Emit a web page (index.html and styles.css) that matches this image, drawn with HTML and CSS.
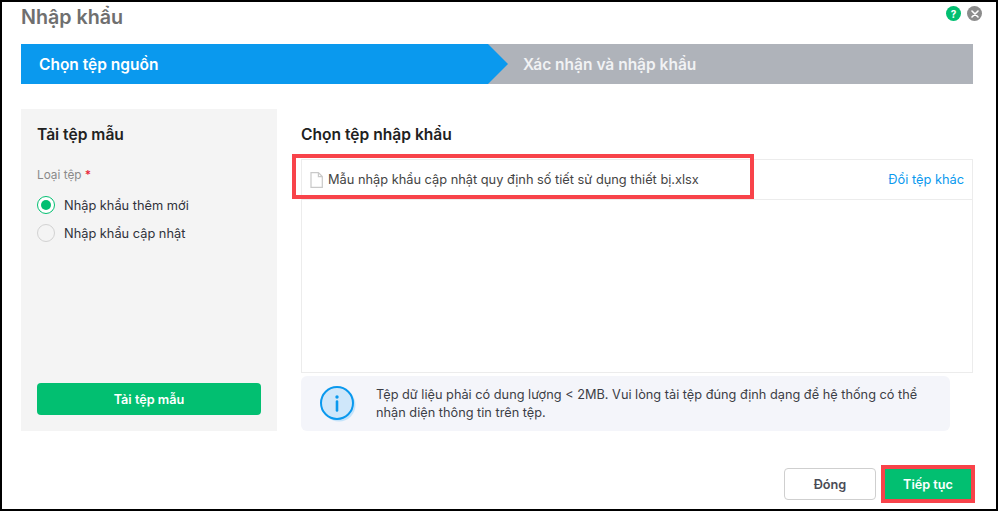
FILE: index.html
```html
<!DOCTYPE html>
<html lang="vi">
<head>
    <meta charset="UTF-8">
    <meta name="viewport" content="width=device-width, initial-scale=1.0">
    <title>Nhập khẩu</title>
    <link rel="stylesheet" href="styles.css">
</head>
<body>
    <div class="dialog">
        <div class="dialog-header">
            <h1>Nhập khẩu</h1>
            <div class="header-icons">
                <span class="round-icon help">?</span>
                <span class="round-icon close">
                    <svg width="8" height="8" viewBox="0 0 8 8"><path d="M1 1l6 6M7 1l-6 6" stroke="#fff" stroke-width="1.6" stroke-linecap="round"/></svg>
                </span>
            </div>
        </div>

        <div class="steps">
            <div class="step step-active">Chọn tệp nguồn</div>
            <div class="step step-next">Xác nhận và nhập khẩu</div>
        </div>

        <div class="content">
            <div class="side">
                <h2>Tải tệp mẫu</h2>
                <div class="field-label">Loại tệp <span class="required">*</span></div>
                <label class="radio-row"><span class="radio radio-on"></span>Nhập khẩu thêm mới</label>
                <label class="radio-row"><span class="radio"></span>Nhập khẩu cập nhật</label>
                <button class="btn-download">Tải tệp mẫu</button>
            </div>

            <div class="main">
                <h2>Chọn tệp nhập khẩu</h2>
                <div class="file-box">
                    <div class="file-row">
                        <svg class="file-icon" width="13" height="16" viewBox="0 0 13 16"><path d="M1 .7h7.4L12.3 4.600V15.300H1z M8.400 .7V4.600H12.300" fill="#fff" stroke="#c9c9c9" stroke-width="1.200"/></svg>
                        <span class="file-name">Mẫu nhập khẩu cập nhật quy định số tiết sử dụng thiết bị.xlsx</span>
                        <a class="change-file">Đổi tệp khác</a>
                        <div class="highlight highlight-file"></div>
                    </div>
                </div>
                <div class="notice">
                    <svg class="notice-icon" width="38" height="38" viewBox="0 0 38 38">
                        <circle cx="20" cy="20" r="16.500" fill="#c4e3fa"/>
                        <circle cx="18" cy="18" r="16" fill="#cfe7fa" stroke="#0a99ee" stroke-width="2"/>
                        <circle cx="18" cy="12" r="1.700" fill="#0a99ee"/>
                        <path d="M18 16.500v9" stroke="#0a99ee" stroke-width="2.600" stroke-linecap="round"/>
                    </svg>
                    <p>Tệp dữ liệu phải có dung lượng &lt; 2MB. Vui lòng tải tệp đúng định dạng để hệ thống có thể nhận diện thông tin trên tệp.</p>
                </div>
            </div>
        </div>

        <div class="dialog-footer">
            <button class="btn-close">Đóng</button>
            <button class="btn-next">Tiếp tục</button>
        </div>
    </div>
</body>
</html>
```

FILE: styles.css
```css
* {
    box-sizing: border-box;
}

html, body {
    margin: 0;
    height: 100%;
    background: #fff;
}

body {
    font-family: Inter, "Liberation Sans", sans-serif;
    overflow: hidden;
}

.dialog {
    height: 511px;
    border: 2px solid #000;
    padding: 0 23px 0 19px;
    display: flex;
    flex-direction: column;
}

.dialog-header {
    height: 42px;
    display: flex;
    justify-content: space-between;
}

h1 {
    margin: 3px 0 0;
    font-size: 19.700px;
    line-height: 24px;
    font-weight: 600;
    color: #6f6f6f;
}

.header-icons {
    display: flex;
    gap: 6px;
    margin: 4px 0 0;
    position: relative;
    left: 9px;
}

.round-icon {
    width: 15px;
    height: 15px;
    border-radius: 50%;
    display: flex;
    align-items: center;
    justify-content: center;
    color: #fff;
    font-size: 10px;
    font-weight: 700;
}

.help {
    background: #02bf71;
}

.close {
    background: #8c8c8c;
}

.steps {
    display: flex;
    height: 40px;
    background: #afb3ba;
    flex-shrink: 0;
}

.step {
    font-size: 15.500px;
    line-height: 41px;
    font-weight: 600;
    color: #fff;
}

.step-active {
    width: 467px;
    padding-left: 18px;
    background: #0a99ee;
    position: relative;
}

.step-active::after {
    content: "";
    position: absolute;
    left: 100%;
    top: 0;
    border-left: 20px solid #0a99ee;
    border-top: 20px solid transparent;
    border-bottom: 20px solid transparent;
}

.step-next {
    padding-left: 35px;
    color: #f1f2f4;
}

.content {
    display: flex;
    gap: 24px;
    margin-top: 25px;
    height: 322px;
}

.side {
    width: 256px;
    padding: 16px 16px;
    background: #f4f4f4;
    display: flex;
    flex-direction: column;
}

h2 {
    margin: 0;
    font-size: 15.600px;
    line-height: 20px;
    font-weight: 600;
    color: #212121;
}

.field-label {
    margin-top: 22px;
    font-size: 11.800px;
    line-height: 16px;
    color: #8a8a8a;
}

.required {
    color: #e8283a;
    font-weight: 600;
}

.radio-row {
    display: flex;
    align-items: center;
    gap: 9px;
    height: 28px;
    font-size: 12.800px;
    color: #30323a;
}

.field-label + .radio-row {
    margin-top: 8px;
}

.radio {
    width: 18px;
    height: 18px;
    border-radius: 50%;
    border: 1px solid #d2d2d2;
    background: #f4f4f4;
    flex-shrink: 0;
    display: flex;
    align-items: center;
    justify-content: center;
}

.radio-on {
    border-color: #02bf71;
    background: #fff;
}

.radio-on::before {
    content: "";
    width: 10px;
    height: 10px;
    border-radius: 50%;
    background: #02bf71;
}

.btn-download {
    margin-top: auto;
    height: 32px;
    border: none;
    border-radius: 4px;
    background: #02bf71;
    color: #fff;
    font-family: inherit;
    font-size: 12.700px;
    font-weight: 600;
}

.main {
    width: 672px;
    padding-top: 16px;
    display: flex;
    flex-direction: column;
}

.file-box {
    margin-top: 14px;
    height: 215px;
    border: 1px solid #ececec;
}

.file-row {
    height: 40px;
    border-bottom: 1px solid #ececec;
    display: flex;
    align-items: center;
    padding: 0 8px;
    position: relative;
}

.file-icon {
    flex-shrink: 0;
    margin-right: 5px;
}

.file-name {
    font-size: 12.800px;
    color: #444;
}

.change-file {
    margin-left: auto;
    font-size: 12.800px;
    color: #0a99ee;
}

.highlight {
    position: absolute;
    border: 4px solid #f8434a;
}

.highlight-file {
    left: -10px;
    top: -6px;
    width: 462px;
    height: 45px;
}

.notice {
    margin-top: 3px;
    width: 649px;
    height: 55px;
    padding: 0 24px 0 18px;
    background: #f4f5fa;
    border-radius: 6px;
    display: flex;
    align-items: center;
    gap: 19px;
}

.notice-icon {
    flex-shrink: 0;
}

.notice p {
    margin: 0;
    font-size: 12.760px;
    line-height: 18px;
    color: #3c3e46;
}

.dialog-footer {
    margin: 37px 1px 0 0;
    display: flex;
    justify-content: flex-end;
    gap: 8px;
}

.dialog-footer button {
    height: 32px;
    font-family: inherit;
    font-size: 12.700px;
    font-weight: 600;
    border-radius: 4px;
}

.btn-close {
    width: 92px;
    background: #fff;
    border: 1px solid #cfcfcf;
    color: #4a4c56;
}

.btn-next {
    width: 88px;
    background: #02bf71;
    border: 1px solid #f8434a;
    color: #fff;
    outline: 3px solid #f8434a;
    border-radius: 0 !important;
}
```
